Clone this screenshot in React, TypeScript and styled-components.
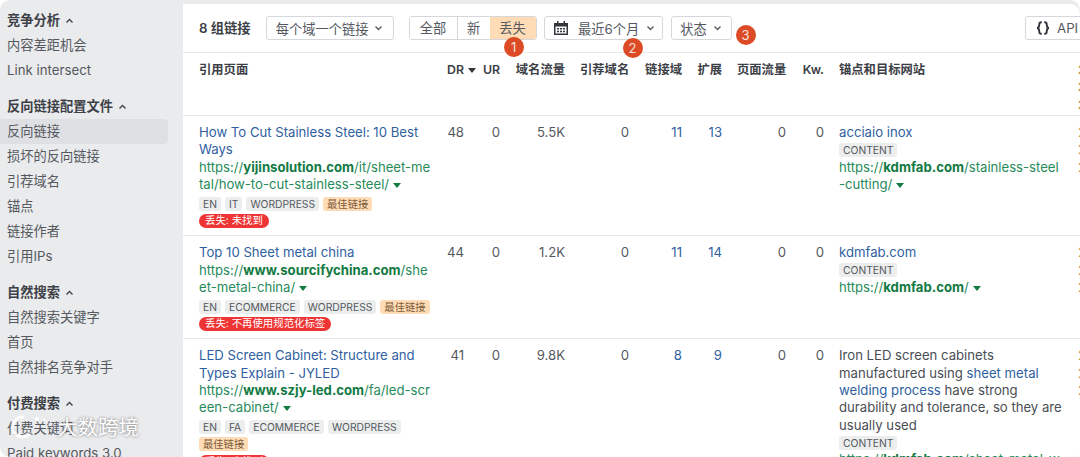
import React from "react";
import styled, { createGlobalStyle } from "styled-components";

const Global = createGlobalStyle`
  html, body { margin: 0; padding: 0; background: #fff; }
  body { font-family: Inter, "Noto Sans CJK SC", "Liberation Sans", sans-serif; font-size: 13.25px; color: #3f4349; }
`;

const Page = styled.div`
  position: relative; width: 1080px; height: 457px; overflow: hidden;
  display: flex; background: #eaebed; border-radius: 10px;
`;
const Side = styled.nav`
  flex: 0 0 183px; height: 457px; padding-top: 8px; box-sizing: border-box; overflow: hidden;
  display: flex; flex-direction: column; gap: 11px;
`;
const Group = styled.div`display: flex; flex-direction: column;`;
const GroupTitle = styled.div`
  height: 25px; line-height: 25px; padding-left: 7px; font-weight: 600; color: #3c4046;
  display: flex; align-items: center; gap: 5px;
`;
const NavItem = styled.div<{ $active?: boolean }>`
  height: 25px; line-height: 25px; padding-left: 7px; margin-right: 15px; color: #55595f;
  border-radius: 0 4px 4px 0; background: ${p => (p.$active ? "#dfe0e3" : "transparent")};
`;
const Main = styled.main`
  flex: 1; margin-top: 4px; background: #fff; overflow: hidden; border-top-right-radius: 10px; font-size: 13.15px;
`;
const Toolbar = styled.div`
  width: 920px; height: 49px; box-sizing: border-box; padding: 12px 0 0 16px; font-size: 13.25px;
  border-bottom: 1px solid #e8e9eb; display: flex; align-items: flex-start;
`;
const Count = styled.div`height: 24px; line-height: 24px; font-weight: 600; color: #3c4046; margin-right: 15px;`;
const Btn = styled.div<{ $w: number; $mr?: number }>`
  position: relative; box-sizing: border-box; width: ${p => p.$w}px; height: 24px; flex: none;
  margin-right: ${p => p.$mr ?? 0}px; border: 1px solid #d6d7da; border-radius: 3px; background: #fff;
  display: flex; align-items: center; justify-content: center; gap: 6px; color: #55595f;
`;
const DateBtn = styled(Btn)`padding-left: 3px; gap: 7px;`;
const DateLabel = styled.span`margin-left: 3px;`;
const PushBtn = styled(Btn)`margin-left: auto; justify-content: flex-start; padding-left: 10px; gap: 7px;`;
const Seg = styled.div`
  display: flex; width: 128px; height: 24px; flex: none; margin-right: 7px; box-sizing: border-box;
  border: 1px solid #d6d7da; border-radius: 3px;
`;
const SegItem = styled.div<{ $w: number; $on?: boolean }>`
  position: relative; box-sizing: border-box; width: ${p => p.$w}px; line-height: 22px; text-align: center; color: #55595f;
  background: ${p => (p.$on ? "#ffdcb5" : "#fff")};
  border-left: ${p => (p.$on ? "none" : "1px solid #d6d7da")};
  &:first-child { border-left: none; }
`;
const Badge = styled.span<{ $l: number; $t: number }>`
  position: absolute; left: ${p => p.$l}px; top: ${p => p.$t}px; z-index: 2; width: 20px; height: 20px; border-radius: 50%;
  background: #dc4a26; color: #f7e3d9; font-size: 13px; line-height: 20px; text-align: center;
`;
const cols = "248px 36px 32px 65px 64px 53px 40px 64px 38px 239px 30px";
const Table = styled.div`width: 1000px; box-sizing: border-box;`;
const Head = styled.div`
  display: grid; grid-template-columns: ${cols}; height: 63px; box-sizing: border-box; padding: 8px 0 0 16px;
  border-bottom: 1px solid #e8e9eb; line-height: 17.33px; font-weight: 600; font-size: 12.3px; color: #3c4046;
`;
const HeadCell = styled.div<{ $num?: boolean; $dr?: boolean }>`
  white-space: nowrap; text-align: ${p => (p.$num ? "right" : "left")};
  padding-right: ${p => (p.$dr ? 8 : p.$num ? 15 : 0)}px;
`;
const Row = styled.div`
  display: grid; grid-template-columns: ${cols}; box-sizing: border-box; padding: 8px 0 7px 16px;
  border-bottom: 1px solid #e8e9eb; line-height: 17.33px;
`;
const TextCol = styled.div<{ $w: number }>`width: ${p => p.$w}px; word-break: break-all;`;
const Num = styled.div<{ $dr?: boolean; $link?: boolean }>`
  text-align: right; padding-right: ${p => (p.$dr ? 19 : 15)}px; color: ${p => (p.$link ? "#2f5f9f" : "#55595f")};
`;
const Title = styled.div`color: #2f5f9f; word-break: normal;`;
const Url = styled.div`color: #278a5b; & b { color: #137a43; font-weight: 700; }`;
const Tags = styled.div`display: flex; flex-wrap: wrap; gap: 3px 4px; margin-top: 3.4px;`;
const Tag = styled.span<{ $best?: boolean }>`
  height: 14px; line-height: 14px; padding: 0 4px; border-radius: 3px; font-size: 10.3px; white-space: nowrap;
  background: ${p => (p.$best ? "#ffdcb5" : "#eceded")}; color: ${p => (p.$best ? "#7b5a3a" : "#55595f")};
`;
const Lost = styled.div`
  display: table; height: 14px; line-height: 14px; margin-top: 3.6px; padding: 0 6px; border-radius: 7px;
  background: #ee3434; color: #fff; font-size: 10.4px;
`;
const Anchor = styled.div`color: #4a4e54; word-break: normal; & a { color: #2f5f9f; }`;
const AnchorTag = styled(Tag)`display: table; margin: 1.6px 0 1.73px;`;
const Clip = styled.div`color: #c08a4e; white-space: pre-line;`;
const Mark = styled.div`
  position: absolute; left: 10px; top: 411px; display: flex; align-items: center; gap: 9px; z-index: 3;
  color: #fff; font-size: 20.5px; text-shadow: 0 0 3px rgba(70,70,70,.75);
`;

const Up = () => (
  <svg width="9" height="6" viewBox="0 0 9 6"><path d="M1.5 4.5 4.5 1.5 7.5 4.5" fill="none" stroke="#3c4046" strokeWidth="1.3" /></svg>
);
const Down = () => (
  <svg width="9" height="6" viewBox="0 0 9 6"><path d="M1.5 1.5 4.5 4.5 7.5 1.5" fill="none" stroke="#55595f" strokeWidth="1.3" /></svg>
);
const Caret = ({ c = "#137a43" }: { c?: string }) => (
  <svg width="8" height="5" viewBox="0 0 8 5" style={{ margin: "0 0 1px 4px" }}><path d="M0 0h8L4 5z" fill={c} /></svg>
);
const Cal = () => (
  <svg width="14" height="14" viewBox="0 0 14 14">
    <path d="M3 0h1.5v2h5V0H11v2h3v12H0V2h3z" fill="#33363b" />
    <path d="M1.5 5.5h11v7h-11z" fill="#fff" />
    <path d="M3 7h2v1.5H3zm3 0h2v1.5H6zm3 0h2v1.5H9zM3 9.8h2v1.5H3zm3 0h2v1.5H6zm3 0h2v1.5H9z" fill="#33363b" />
  </svg>
);
const BraceIcon = () => (
  <svg width="14" height="14" viewBox="0 0 14 14" fill="none" stroke="#33363b" strokeWidth="1.9" strokeLinecap="round">
    <path d="M5 1.2C3.2 1.2 3.2 2.4 3.2 4S3 6.6 1.2 7C3 7.4 3.2 8.4 3.2 10s0 2.8 1.8 2.8" />
    <path d="M9 1.2c1.8 0 1.8 1.2 1.8 2.8s.2 2.6 2 3c-1.8.4-2 1.4-2 3s0 2.8-1.8 2.8" />
  </svg>
);

const nav = [
  { t: "竞争分析", i: ["内容差距机会", "Link intersect"] },
  { t: "反向链接配置文件", i: ["反向链接", "损坏的反向链接", "引荐域名", "锚点", "链接作者", "引用IPs"] },
  { t: "自然搜索", i: ["自然搜索关键字", "首页", "自然排名竞争对手"] },
  { t: "付费搜索", i: ["付费关键词", "Paid keywords 3.0"] },
];
const heads: [string, boolean][] = [
  ["引用页面", false], ["DR", true], ["UR", true], ["域名流量", true], ["引荐域名", true], ["链接域", true],
  ["扩展", true], ["页面流量", true], ["Kw.", true], ["锚点和目标网站", false],
];
type R = {
  title: string; pre: string; dom: string; rest: string; langs: string[]; best: boolean; lost: string;
  nums: string[]; anchor: React.ReactNode; aPre: string; aDom: string; aRest: string; caret: boolean;
};
const rows: R[] = [
  {
    title: "How To Cut Stainless Steel: 10 Best Ways", pre: "https://", dom: "yijinsolution.com", rest: "/it/sheet-metal/how-to-cut-stainless-steel/",
    langs: ["EN", "IT", "WORDPRESS"], best: true, lost: "丢失: 未找到", nums: ["48", "0", "5.5K", "0", "11", "13", "0", "0"],
    anchor: <a>acciaio inox</a>, aPre: "https://", aDom: "kdmfab.com", aRest: "/stainless-steel-cutting/", caret: true,
  },
  {
    title: "Top 10 Sheet metal china", pre: "https://", dom: "www.sourcifychina.com", rest: "/sheet-metal-china/",
    langs: ["EN", "ECOMMERCE", "WORDPRESS"], best: true, lost: "丢失: 不再使用规范化标签", nums: ["44", "0", "1.2K", "0", "11", "14", "0", "0"],
    anchor: <a>kdmfab.com</a>, aPre: "https://", aDom: "kdmfab.com", aRest: "/", caret: true,
  },
  {
    title: "LED Screen Cabinet: Structure and Types Explain - JYLED", pre: "https://", dom: "www.szjy-led.com", rest: "/fa/led-screen-cabinet/",
    langs: ["EN", "FA", "ECOMMERCE", "WORDPRESS"], best: true, lost: "丢失: 未找到", nums: ["41", "0", "9.8K", "0", "8", "9", "0", "0"],
    anchor: <>Iron LED screen cabinets manufactured using <a>sheet metal welding process</a> have strong durability and tolerance, so they are usually used</>,
    aPre: "https://", aDom: "kdmfab.com", aRest: "/sheet-metal-welding/", caret: true,
  },
];

export default function App() {
  return (
    <>
      <Global />
      <Page>
        <Side>
          {nav.map(g => (
            <Group key={g.t}>
              <GroupTitle>{g.t} <Up /></GroupTitle>
              {g.i.map(x => <NavItem key={x} $active={x === "反向链接"}>{x}</NavItem>)}
            </Group>
          ))}
        </Side>
        <Main>
          <Toolbar>
            <Count>8 组链接</Count>
            <Btn $w={128} $mr={15}>每个域一个链接 <Down /></Btn>
            <Seg>
              <SegItem $w={47}>全部</SegItem>
              <SegItem $w={33}>新</SegItem>
              <SegItem $w={46} $on>丢失<Badge $l={14} $t={20}>1</Badge></SegItem>
            </Seg>
            <DateBtn $w={119} $mr={8}><Cal /><DateLabel>最近6个月</DateLabel> <Down /><Badge $l={78} $t={21}>2</Badge></DateBtn>
            <Btn $w={61}>状态 <Down /><Badge $l={64} $t={8}>3</Badge></Btn>
            <PushBtn $w={78}><BraceIcon />API</PushBtn>
          </Toolbar>
          <Table>
            <Head>
              {heads.map(([h, n]) => (
                <HeadCell key={h} $num={n} $dr={h === "DR"}>{h}{h === "DR" && <Caret c="#33363b" />}</HeadCell>
              ))}
              <Clip>{"2\n2\n2"}</Clip>
            </Head>
            {rows.map(r => (
              <Row key={r.title}>
                <TextCol $w={233}>
                  <Title>{r.title}</Title>
                  <Url>{r.pre}<b>{r.dom}</b>{r.rest}<Caret /></Url>
                  <Tags>
                    {r.langs.map(l => <Tag key={l}>{l}</Tag>)}
                    {r.best && <Tag $best>最佳链接</Tag>}
                  </Tags>
                  <Lost>{r.lost}</Lost>
                </TextCol>
                {r.nums.map((n, i) => (
                  <Num key={i} $dr={i === 0} $link={i === 4 || i === 5}>{n}</Num>
                ))}
                <TextCol $w={224}>
                  <Anchor>{r.anchor}</Anchor>
                  <AnchorTag>CONTENT</AnchorTag>
                  <Url>{r.aPre}<b>{r.aDom}</b>{r.aRest}<Caret /></Url>
                </TextCol>
                <Clip>{"2\n2\n2"}</Clip>
              </Row>
            ))}
          </Table>
        </Main>
        <Mark>
          <svg width="38" height="26" viewBox="0 0 38 26">
            <path d="M14 4a10 10 0 1 0 6 17" fill="none" stroke="rgba(255,255,255,.85)" strokeWidth="3" />
            <circle cx="27" cy="6" r="2" fill="rgba(255,255,255,.85)" /><circle cx="34" cy="7" r="1.5" fill="rgba(255,255,255,.85)" />
          </svg>
          <span>大数跨境</span>
        </Mark>
      </Page>
    </>
  );
}
